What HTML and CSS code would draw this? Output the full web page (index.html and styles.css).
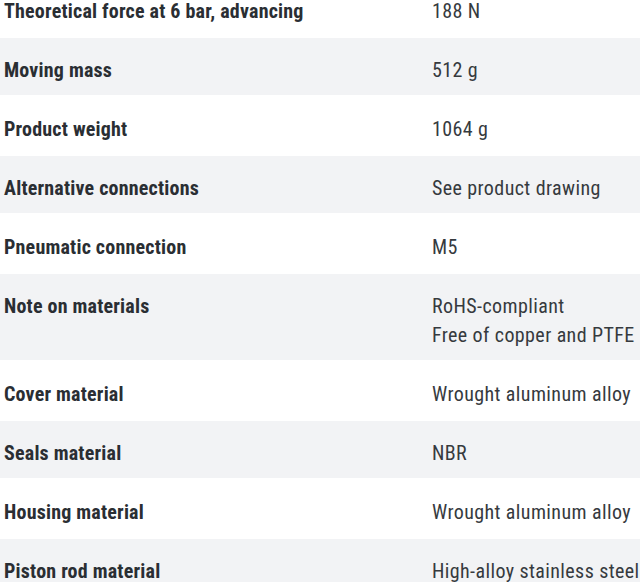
FILE: index.html
```html
<!DOCTYPE html>
<html lang="en">
<head>
<meta charset="utf-8">
<title>Technical data</title>
<link rel="stylesheet" href="styles.css">
</head>
<body>
<div class="specs">
  <div class="row"><div class="label">Theoretical force at 6 bar, advancing</div><div class="value">188 N</div></div>
  <div class="row"><div class="label">Moving mass</div><div class="value">512 g</div></div>
  <div class="row"><div class="label">Product weight</div><div class="value">1064 g</div></div>
  <div class="row"><div class="label">Alternative connections</div><div class="value">See product drawing</div></div>
  <div class="row"><div class="label">Pneumatic connection</div><div class="value">M5</div></div>
  <div class="row"><div class="label">Note on materials</div><div class="value">RoHS-compliant<br>Free of copper and PTFE</div></div>
  <div class="row"><div class="label">Cover material</div><div class="value">Wrought aluminum alloy</div></div>
  <div class="row"><div class="label">Seals material</div><div class="value">NBR</div></div>
  <div class="row"><div class="label">Housing material</div><div class="value">Wrought aluminum alloy</div></div>
  <div class="row"><div class="label">Piston rod material</div><div class="value">High-alloy stainless steel</div></div>
</div>
</body>
</html>
```
FILE: styles.css
```css
html, body {
  margin: 0;
  padding: 0;
  background: #ffffff;
  overflow: hidden;
}
body {
  width: 640px;
  height: 582px;
  font-family: "Roboto", "Open Sans", sans-serif;
  font-stretch: condensed;
  color: #333333;
  font-size: 20px;
  line-height: 29px;
}
.specs {
  display: flex;
  flex-direction: column;
  gap: 2px;
  margin-top: -21px;
}
.row {
  display: grid;
  grid-template-columns: 428px 1fr;
  padding: 18px 0 10px 4px;
  background: #ffffff;
}
.row:nth-child(even) {
  background: #f2f3f5;
}
.label {
  font-weight: 700;
  letter-spacing: 0.2px;
  color: #2a2e33;
  white-space: nowrap;
}
.value {
  font-weight: 400;
  letter-spacing: 0.4px;
  color: #363a3e;
  white-space: nowrap;
}
```
